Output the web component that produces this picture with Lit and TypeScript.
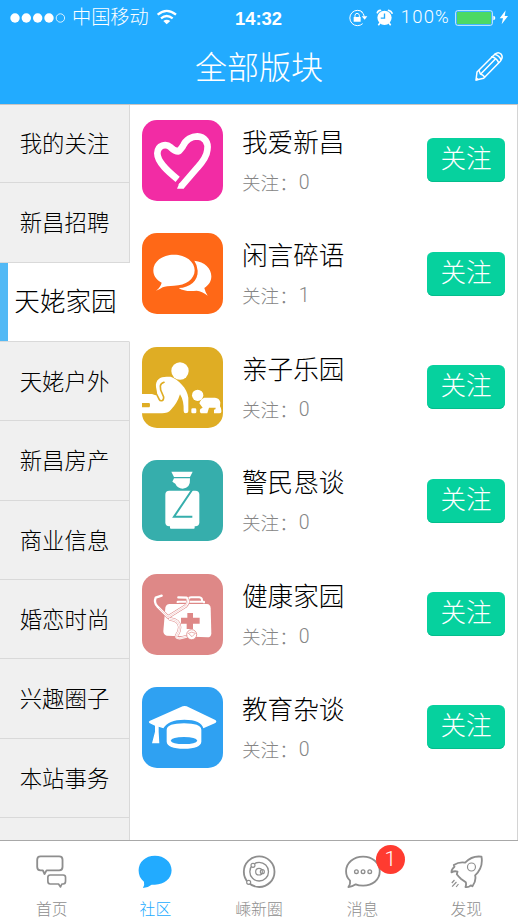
import { LitElement, html, css, svg } from "lit";
import { customElement, property } from "lit/decorators.js";
import { classMap } from "lit/directives/class-map.js";

const cjk = css`"Noto Sans CJK SC", sans-serif`;

interface Board {
  name: string;
  count: number;
  tone: string;
  box: string;
  art: unknown;
}

const boards: Board[] = [
  {
    name: "我爱新昌",
    count: 0,
    tone: "pink",
    box: "38 30 243 243",
    art: svg`<path fill="none" stroke="#fff" stroke-width="20" stroke-linejoin="round"
        d="M145 208C120 188 84 158 84 130C85 105 110 100 124 112Q136 124 147 124Q152 121 161 108C170 88 188 79 204 79C226 80 238 98 234 120C232 142 216 160 204 173L155 230"/>
      <path fill="#fff" d="M150 220L143 236H162L168 226Z"/>
      <path stroke="#f22ca4" stroke-width="4" d="M141 220L160 196"/>`,
  },
  {
    name: "闲言碎语",
    count: 1,
    tone: "orange",
    box: "38 370 243 243",
    art: svg`<path fill="#fff" d="M134 435C170 435 196 456 196 482C196 508 170 528 134 528Q110 528 100 533Q90 540 80 543Q94 532 97 519C80 510 72 498 72 482C72 456 98 435 134 435Z"/>
      <path fill="#fff" d="M195 453C226 457 246 475 246 500C246 516 237 528 225 535Q228 548 235 558Q218 545 202 543C180 546 162 544 148 535C182 534 207 512 205 483Q204 466 195 453Z"/>`,
  },
  {
    name: "亲子乐园",
    count: 0,
    tone: "gold",
    box: "38 36 243 243",
    art: svg`<circle cx="152" cy="108" r="26" fill="#fff"/>
      <path fill="#fff" d="M38 177H68L79 181Q84 178 83 172L80 156C78 134 92 125 112 125H124C146 132 174 160 177 188V229Q177 235 169 235Q163 235 163 228Q164 197 152 178Q144 205 124 225Q116 235 98 235H38V217H60Q62 216 62 210Q62 205 60 204H38Z"/>
      <path fill="none" stroke="#dfad24" stroke-width="5" stroke-linecap="round" stroke-linejoin="round" d="M104 142Q94 146 93 153L94 165L103 186Q103 196 98 197Q92 198 90 194L80 174"/>
      <circle cx="205" cy="181" r="17" fill="#fff"/>
      <rect x="186" y="220" width="15" height="15" rx="4" fill="#fff"/>
      <path fill="#fff" d="M225 188H257Q270 189 273 202L272 214Q276 220 276 226V231Q275 235 270 235H254V224Q260 224 259 218H239L234 235H215Q209 231 213 222L220 218L210 205Q215 191 225 188Z"/>`,
  },
  {
    name: "警民恳谈",
    count: 0,
    tone: "teal",
    box: "38 376 243 243",
    art: svg`<path fill="#fff" d="M126 411H190L182 427H134ZM134 431H182Q184 461 160 462Q144 461 138 447L129 441Z"/>
      <rect x="108" y="468" width="102" height="107" rx="12" fill="#fff"/>
      <rect x="122" y="560" width="74" height="22" rx="3" fill="#fff"/>
      <path fill="none" stroke="#36aeac" stroke-width="6" d="M190 463L134 546H189"/>`,
  },
  {
    name: "健康家园",
    count: 0,
    tone: "rose",
    box: "38 25 243 243",
    art: svg`<path fill="none" stroke="#fff" stroke-width="6" stroke-linejoin="round" d="M145 112V108L224 108V113M177 108V102Q178 95 186 95H210Q218 96 218 103V110"/>
      <path fill="#fff" d="M121 115H233Q243 116 244 127L246 204Q245 215 234 215L112 210Q102 207 102 196L108 126Q110 116 121 115Z"/>
      <path fill="#de8887" d="M174 142H191V156H211V174H191V190H172V174H155V156H174Z"/>
      <g fill="none" stroke-linecap="round" stroke-linejoin="round">
        <path stroke="#de8887" stroke-width="10" d="M116 154L84 122Q73 110 79 96L97 90M116 154L169 121Q181 108 172 96L147 95M122 160Q150 163 151 184Q150 200 143 207Q136 218 151 218L172 213"/>
        <path stroke="#fff" stroke-width="7" d="M116 154L84 122Q73 110 79 96L97 90M116 154L169 121Q181 108 172 96L147 95M122 160Q150 163 151 184Q150 200 143 207Q136 218 151 218L172 213"/>
        <path stroke="#e9afae" stroke-width="1.400" d="M116 154L90 128M116 154L169 121Q178 110 172 100M122 160Q150 163 151 184Q150 200 143 207Q136 218 151 218L172 213"/>
      </g>
      <circle cx="187" cy="207" r="15" fill="#fff" stroke="#de8887" stroke-width="2.500"/>
      <path fill="none" stroke="#de8887" stroke-width="2" d="M177 203Q187 196 198 203L188 213Z"/>`,
  },
  {
    name: "教育杂谈",
    count: 0,
    tone: "blue",
    box: "38 366 243 243",
    art: svg`<path fill="#fff" d="M160 424Q166 422 172 424L258 465Q264 470 258 474L222 490Q216 464 165 464Q116 464 102 490L88 485V500L90 535H68L77 500V482L60 474Q56 470 62 467Z"/>
      <path fill="#fff" fill-rule="evenodd" d="M112 494Q114 475 164 475Q214 475 216 494V530Q214 551 164 551Q114 551 112 530ZM124 527Q128 537 164 537Q200 537 204 527Q200 516 164 516Q128 516 124 527Z"/>`,
  },
];

const categories = ["我的关注", "新昌招聘", "天姥家园", "天姥户外", "新昌房产", "商业信息", "婚恋时尚", "兴趣圈子", "本站事务", ""];

const tabs = [
  {
    label: "首页",
    box: "101.400 100 108 108",
    art: svg`<path fill="none" stroke="currentColor" stroke-width="5.500" stroke-linejoin="round" d="M121 107H177Q187 107 187 117V139Q187 149 177 149H139L133 160L128 149H121Q111 149 111 139V117Q111 107 121 107Z"/>
      <path fill="none" stroke="currentColor" stroke-width="5" stroke-linejoin="round" d="M150 163H189Q196 163 196 170V182Q196 190 189 190H185L181 199L175 190H150Q143 190 143 182V170Q143 163 150 163Z"/>`,
  },
  {
    label: "社区",
    box: "412.200 100 108 108",
    art: svg`<path fill="currentColor" d="M466 105C494 105 516 124 516 149C516 174 494 192 466 192H456Q444 202 430 202Q436 194 433 183C422 175 417 163 417 149C417 124 438 105 466 105Z"/>`,
  },
  {
    label: "嵊新圈",
    box: "723 100 108 108",
    art: svg`<g fill="none" stroke="currentColor"><circle cx="777.500" cy="153" r="46" stroke-width="5.500"/><circle cx="777.500" cy="153" r="28" stroke-width="4"/><circle cx="777" cy="153" r="10" stroke-width="3.500"/></g>
      <g fill="#fff" stroke="currentColor" stroke-width="3.500"><circle cx="759" cy="134" r="6"/><circle cx="746" cy="185" r="6"/></g>
      <circle cx="787" cy="153" r="6" fill="none" stroke="currentColor" stroke-width="3.500"/>`,
  },
  {
    label: "消息",
    box: "259.800 100 108 108",
    badge: 1,
    art: svg`<path fill="none" stroke="currentColor" stroke-width="5.500" stroke-linejoin="round" d="M314 108C342 108 364 126 364 152C364 178 342 195 314 195Q300 195 292 191Q282 198 270 199Q277 190 275 180C267 173 263 163 263 152C263 126 286 108 314 108Z"/>
      <g fill="none" stroke="currentColor" stroke-width="4"><circle cx="294" cy="153" r="5.500"/><circle cx="314" cy="153" r="5.500"/><circle cx="334" cy="153" r="5.500"/></g>`,
  },
  {
    label: "发现",
    box: "570.600 100 108 108",
    art: svg`<path fill="none" stroke="currentColor" stroke-width="5.500" stroke-linejoin="round" d="M671 108Q643 104 622 126Q604 123 588 133L590 138Q581 145 581 155Q590 150 599 153L597 161Q602 168 610 175L624 185Q626 192 623 199Q632 201 639 194L644 197Q656 180 652 164Q677 141 671 108Z"/>
      <g fill="none" stroke="currentColor" stroke-width="3.500"><circle cx="641" cy="139" r="12"/><path d="M590 178L582 187M596 184L583 198M602 190L595 199"/></g>`,
  },
];

@customElement("status-bar")
class StatusBar extends LitElement {
  static styles = css`
    :host {
      display: grid;
      grid-template-columns: 1fr auto 1fr;
      align-items: center;
      height: 33px;
      color: #fff;
      font-family: Roboto, ${cjk};
    }
    .side { display: flex; align-items: center; }
    .left { padding-left: 10px; }
    .right { justify-content: flex-end; padding-right: 9px; }
    .dots { width: 56px; height: 10px; }
    .carrier { margin: -2px 0 0 6px; font: 300 19.200px/33px ${cjk}; }
    .wifi { width: 20px; height: 16px; margin: -1px 0 0 8px; }
    .time { font: 700 18.400px/33px "Liberation Sans", sans-serif; padding-top: 2px; margin-left: -1px; }
    .lock { width: 20px; height: 18px; margin-right: -1px; }
    .alarm { width: 17px; height: 17px; margin-left: 9px; }
    .pct { margin: 0 5px 0 8px; font: 300 18.500px/33px Roboto, sans-serif; letter-spacing: 1.200px; }
    .battery { width: 41px; height: 16px; }
    .bolt { width: 10px; height: 15px; margin-left: 3px; }
  `;
  render() {
    return html`
      <div class="side left">
        <svg class="dots" viewBox="0 0 56 10">
          <g fill="#fff"><circle cx="5" cy="5" r="4.700"/><circle cx="16.300" cy="5" r="4.700"/><circle cx="27.700" cy="5" r="4.700"/><circle cx="39" cy="5" r="4.700"/></g>
          <circle cx="50.400" cy="5" r="4.200" fill="none" stroke="#fff" stroke-width=".8"/>
        </svg>
        <span class="carrier">中国移动</span>
        <svg class="wifi" viewBox="472 25 60 46">
          <g fill="none" stroke="#fff" stroke-width="7"><path d="M474 41Q501 18 529 41"/><path d="M484 52Q501 38 519 52"/></g>
          <path fill="#fff" d="M491 60Q501 52 512 60L501 70Z"/>
        </svg>
      </div>
      <span class="time">14:32</span>
      <div class="side right">
        <svg class="lock" viewBox="265 23 60 52">
          <path fill="none" stroke="#fff" stroke-width="3" d="M309 32A23 23 0 1 0 309 66M303 28Q313 35 314 45"/>
          <path fill="#fff" d="M306 44H323L315 54ZM282 46H303V60H282Z"/>
          <path fill="none" stroke="#fff" stroke-width="3" d="M286 47V41Q287 35 292 35Q298 35 299 41V47"/>
        </svg>
        <svg class="alarm" viewBox="353 24 50 50">
          <circle cx="378" cy="50" r="21" fill="#fff"/>
          <path fill="none" stroke="#fff" stroke-width="5" stroke-linecap="round" d="M357 35Q358 29 366 28M390 28Q398 30 400 36M364 66L361 70M392 66L395 70"/>
          <path fill="none" stroke="#22abff" stroke-width="4" d="M378 37V51H367"/>
        </svg>
        <span class="pct">100%</span>
        <svg class="battery" viewBox="594 26 123 48">
          <rect x="596" y="28" width="110" height="44" rx="6" fill="none" stroke="#d8f0ff" stroke-width="3"/>
          <rect x="600" y="32" width="102" height="36" rx="2" fill="#4cd964"/>
          <path fill="#fff" d="M709 43Q715 44 715 50Q715 56 709 57Z"/>
        </svg>
        <svg class="bolt" viewBox="724 29 30 43"><path fill="#fff" d="M744 29L726 53H736L732 71L751 46H741Z"/></svg>
      </div>`;
  }
}

@customElement("board-row")
class BoardRow extends LitElement {
  @property({ attribute: false }) board!: Board;
  static styles = css`
    :host {
      display: flex;
      align-items: flex-start;
      box-sizing: border-box;
      height: 113.400px;
      padding: 16px 12px 0 12px;
      font-family: ${cjk};
    }
    .tile { flex: none; width: 81px; height: 81px; border-radius: 15px; overflow: hidden; }
    .tile svg { display: block; width: 81px; height: 81px; }
    .pink { background: #f22ca4; }
    .orange { background: #ff6817; }
    .gold { background: #dfad24; }
    .teal { background: #36aeac; }
    .rose { background: #de8887; }
    .blue { background: #2fa1f2; }
    .text { flex: 1; padding: 2px 0 0 19px; white-space: nowrap; }
    .name { font-size: 25.600px; font-weight: 300; line-height: 38px; color: #000; }
    .meta { margin-top: 4px; font-size: 18.600px; font-weight: 300; line-height: 36px; color: #858585; display: flex; }
    .num { font-family: Roboto, sans-serif; font-size: 19.500px; padding: 1px 0 0 1px; }
    .follow {
      width: 78px;
      height: 44px;
      margin-top: 18.400px;
      padding: 0;
      border: 0;
      border-radius: 6px;
      background: #06d19e;
      box-shadow: inset 0 -1px 0 #04bd8c;
      color: #fff;
      font: 300 25.600px/38px ${cjk};
      display: flex;
      justify-content: center;
    }
  `;
  render() {
    const b = this.board;
    return html`
      <div class="tile ${b.tone}"><svg viewBox=${b.box}>${b.art}</svg></div>
      <div class="text">
        <div class="name">${b.name}</div>
        <div class="meta"><span>关注：</span><span class="num">${b.count}</span></div>
      </div>
      <button class="follow">关注</button>`;
  }
}

@customElement("app-root")
class AppRoot extends LitElement {
  static styles = css`
    :host {
      display: flex;
      flex-direction: column;
      width: 518px;
      height: 920px;
      overflow: hidden;
      background: #fff;
      font-family: ${cjk};
    }
    header { flex: none; height: 105px; margin-bottom: -1px; position: relative; z-index: 1; background: #22abff; box-sizing: border-box; border-bottom: 1px solid #cbc5c2; }
    .bar { display: grid; grid-template-columns: 1fr auto 1fr; align-items: center; height: 66px; color: #fff; }
    .title { grid-column: 2; font-size: 32px; font-weight: 300; line-height: 66px; margin-top: -3px; }
    .pencil { justify-self: end; width: 30px; height: 31px; margin-right: 14px; }
    main { flex: 1; min-height: 0; display: flex; overflow: hidden; }
    nav { flex: none; width: 130px; }
    .cat {
      box-sizing: border-box;
      height: 79.330px;
      border-bottom: 1px solid #d9d9d9;
      border-right: 1px solid #d9d9d9;
      background: #f0f0f0;
      font-size: 22.400px;
      font-weight: 300;
      line-height: 77px;
      text-align: center;
      color: #000;
    }
    .cat.on { background: linear-gradient(#52b9f5, #52b9f5) 0 0 / 8px 100% no-repeat #fff; border-right-color: #fff; font-size: 25.600px; line-height: 73px; padding-left: 2px; }
    .list { flex: 1; border-right: 1px solid #d4d4d4; }
    footer { flex: none; display: grid; grid-template-columns: repeat(5, 1fr); height: 80px; box-sizing: border-box; border-top: 1px solid #a8a8a8; }
    .tab { display: flex; flex-direction: column; align-items: center; padding-top: 13px; color: #8e8e8e; position: relative; }
    .tab.on { color: #22abff; }
    .tab svg { width: 36px; height: 36px; }
    .label { margin-top: 7px; font-size: 15.800px; font-weight: 300; line-height: 24px; }
    .badge { position: absolute; left: 65px; top: 4px; width: 29px; height: 29px; border-radius: 50%; background: #ff3b30; color: #fff; font: 300 21px/29px Roboto, sans-serif; text-align: center; }
  `;
  render() {
    return html`
      <header>
        <status-bar></status-bar>
        <div class="bar">
          <span class="title">全部版块</span>
          <svg class="pencil" viewBox="648 154 90 93">
            <g fill="none" stroke="#fff" stroke-width="4.500" stroke-linejoin="round" stroke-linecap="round">
              <path d="M654 241L657 217L708 166Q719 154 729 163Q737 173 727 185L677 236Z"/>
              <path d="M663 212L667 223Q675 225 680 232M669 222L712 178M701 171Q716 174 722 189M710 164Q724 168 729 180"/>
            </g>
            <path fill="#fff" d="M653 243L655 232L664 240Z"/>
          </svg>
        </div>
      </header>
      <main>
        <nav>${categories.map((c, i) => html`<div class=${classMap({ cat: true, on: i === 2 })}>${c}</div>`)}</nav>
        <div class="list">${boards.map((b) => html`<board-row .board=${b}></board-row>`)}</div>
      </main>
      <footer>
        ${tabs.map(
          (t, i) => html`<div class=${classMap({ tab: true, on: i === 1 })}>
            <svg viewBox=${t.box}>${t.art}</svg>
            <span class="label">${t.label}</span>
            ${t.badge ? html`<span class="badge">${t.badge}</span>` : ""}
          </div>`
        )}
      </footer>`;
  }
}
